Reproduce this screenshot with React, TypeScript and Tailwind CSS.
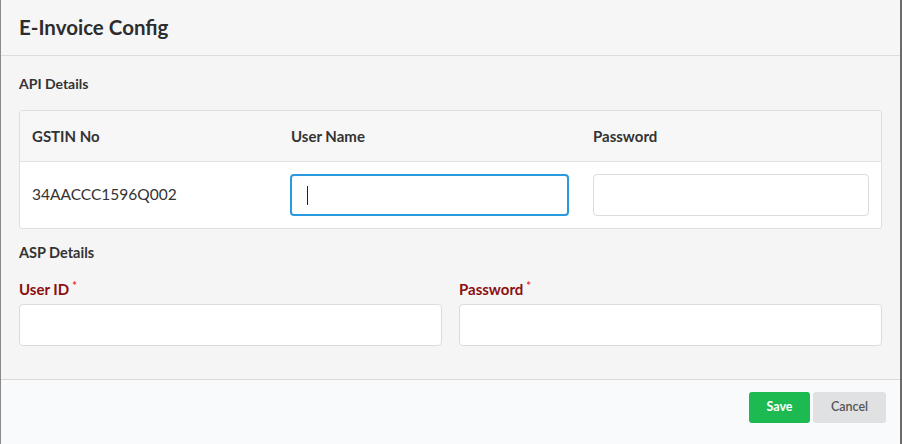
import React from "react";

export default function App() {
    return (
        <div className="w-[902px] h-[444px] flex flex-col bg-[#f5f5f5] border-l border-l-[#8a8a8a] border-r-2 border-r-[#6b6b6b] text-[#333] font-['Lato','Liberation_Sans',sans-serif] overflow-hidden">
            <header className="h-[56px] shrink-0 flex items-center px-[18px] border-b border-[#dcdcdc] bg-[#f6f6f6]">
                <h1 className="text-[20.5px] font-bold text-[#2d2d2d]">E-Invoice Config</h1>
            </header>

            <main className="flex-1 px-[18px]">
                <h2 className="text-[14px] font-bold mt-[18px] mb-[16px] leading-[20px]">API Details</h2>

                <div className="border border-[#dedede] rounded-[3px] bg-white">
                    <div className="grid grid-cols-[258px_303px_1fr] h-[51px] items-center bg-[#f7f7f7] border-b border-[#e2e2e2] rounded-t-[3px] text-[15px] font-bold">
                        <div className="px-3">GSTIN No</div>
                        <div className="px-3 pl-[13px]">User Name</div>
                        <div className="px-3">Password</div>
                    </div>
                    <div className="grid grid-cols-[258px_303px_1fr] h-[66px] items-center text-[15.5px]">
                        <div className="px-3">34AACCC1596Q002</div>
                        <div className="px-3">
                            <div className="h-[42px] w-[279px] rounded-[4px] border-2 border-[#2a9ae0] bg-white flex items-center pl-[15px]">
                                <span className="w-px h-[19px] bg-[#222]" />
                            </div>
                        </div>
                        <div className="px-3 pr-[12px]">
                            <input className="h-[42px] w-full rounded-[4px] border border-[#dcdcdc] bg-white outline-none" />
                        </div>
                    </div>
                </div>

                <h2 className="text-[14.5px] font-bold mt-[14px] leading-[20px]">ASP Details</h2>

                <div className="grid grid-cols-2 gap-[17px] mt-[16px]">
                    <div>
                        <label className="text-[15px] font-bold text-[#8b0f0f] leading-[20px] block">
                            User ID<span className="text-[#e53935] text-[11px] align-top ml-[3px] relative -top-[3px]">*</span>
                        </label>
                        <input className="mt-[5px] h-[42px] w-full rounded-[4px] border border-[#dcdcdc] bg-white outline-none" />
                    </div>
                    <div>
                        <label className="text-[15px] font-bold text-[#8b0f0f] leading-[20px] block">
                            Password<span className="text-[#e53935] text-[11px] align-top ml-[3px] relative -top-[3px]">*</span>
                        </label>
                        <input className="mt-[5px] h-[42px] w-full rounded-[4px] border border-[#dcdcdc] bg-white outline-none" />
                    </div>
                </div>
            </main>

            <footer className="h-[65px] shrink-0 border-t border-[#d9d9d9] bg-[#f9fafb] flex items-start justify-end pt-[12px] pr-[14px] gap-[3px]">
                <button className="h-[31px] w-[61px] rounded-[3px] bg-[#1dba52] text-white text-[12.5px] font-bold">Save</button>
                <button className="h-[31px] w-[73px] rounded-[3px] bg-[#e0e1e3] text-[#555] text-[12.5px] font-semibold">Cancel</button>
            </footer>
        </div>
    );
}
